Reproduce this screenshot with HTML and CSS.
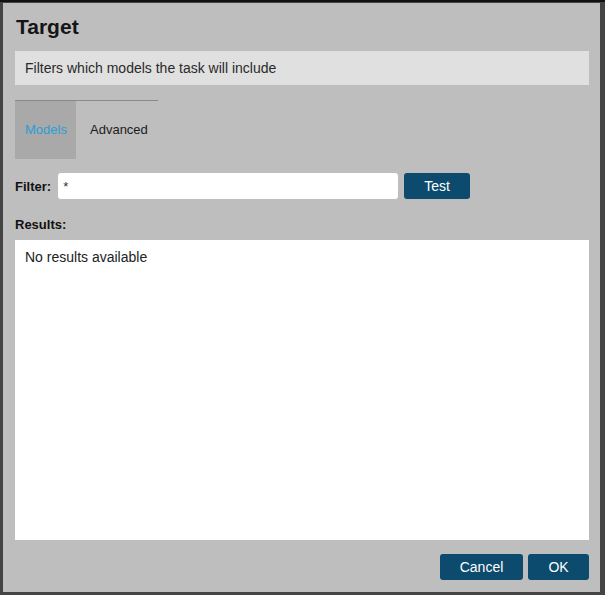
FILE: index.html
```html
<!DOCTYPE html>
<html>
<head>
<meta charset="utf-8">
<link rel="stylesheet" href="styles.css">
</head>
<body>
<div class="backdrop">
  <div class="dialog">
    <h1 class="title">Target</h1>
    <div class="desc">Filters which models the task will include</div>
    <div class="tabs">
      <div class="tab active">Models</div>
      <div class="tab">Advanced</div>
    </div>
    <div class="filter-row">
      <label class="label">Filter:</label>
      <input class="input" type="text" value="*">
      <button class="btn test">Test</button>
    </div>
    <div class="label results-label">Results:</div>
    <div class="results">No results available</div>
    <div class="footer">
      <button class="btn cancel">Cancel</button>
      <button class="btn ok">OK</button>
    </div>
  </div>
</div>
</body>
</html>
```
FILE: styles.css
```css
html, body {
  margin: 0;
  padding: 0;
  background: #444444;
  width: 605px;
  height: 595px;
  overflow: hidden;
  font-family: "Liberation Sans", Arial, sans-serif;
}
.backdrop {
  width: 605px;
  height: 595px;
  border-top: 2px solid #111;
  box-sizing: border-box;
  padding: 1px 5px 3px 3px;
}
.dialog {
  background: #bebebe;
  height: 589px;
  box-sizing: border-box;
  padding: 12px 11px 0 12px;
  display: flex;
  flex-direction: column;
}
.title {
  margin: 0;
  font-size: 21px;
  font-weight: bold;
  color: #151515;
  line-height: 24px;
  height: 24px;
  padding-left: 1px;
}
.desc {
  margin-top: 12px;
  background: #e0e0e0;
  height: 34px;
  line-height: 34px;
  padding-left: 10px;
  font-size: 14px;
  color: #2a2a2a;
}
.tabs {
  margin-top: 15px;
  display: flex;
  width: 143px;
  border-top: 1px solid #8a8a8a;
  height: 58px;
}
.tab {
  font-size: 13px;
  line-height: 58px;
  color: #1c1c1c;
  padding: 0 10px 0 14px;
}
.tab.active {
  background: #a9a9a9;
  color: #2a9fd6;
  width: 61px;
  box-sizing: border-box;
  padding: 0 0 0 10px;
}
.filter-row {
  margin-top: 14px;
  display: flex;
  align-items: center;
  height: 26px;
}
.label {
  font-size: 13px;
  font-weight: bold;
  color: #111;
}
.input {
  margin-left: 7px;
  width: 340px;
  height: 26px;
  box-sizing: border-box;
  border: none;
  border-radius: 3px;
  background: #fff;
  padding: 0 5px;
  font-family: "Liberation Sans", Arial, sans-serif;
  font-size: 13px;
  color: #333;
  outline: none;
}
.btn {
  border: none;
  border-radius: 3px;
  background: #0c4a6e;
  color: #fff;
  font-family: "Liberation Sans", Arial, sans-serif;
  font-size: 14px;
  height: 26px;
  padding: 0;
}
.test {
  margin-left: 6px;
  width: 66px;
}
.results-label {
  margin-top: 18px;
  line-height: 16px;
}
.results {
  margin-top: 7px;
  background: #fff;
  height: 300px;
  box-sizing: border-box;
  padding: 9px 10px;
  font-size: 14px;
  color: #222;
}
.footer {
  margin-top: 14px;
  display: flex;
  justify-content: flex-end;
  gap: 5px;
}
.cancel { width: 83px; }
.ok { width: 61px; }
```
